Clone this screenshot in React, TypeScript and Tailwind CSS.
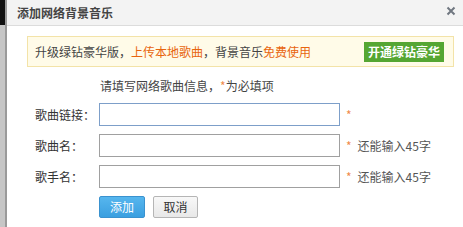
import React from "react";

const font = { fontFamily: '"Noto Sans CJK SC", "Noto Sans", sans-serif' };

function Field({ label, hint, focused }: { label: string; hint?: boolean; focused?: boolean }) {
  return (
    <div className="flex h-[23px] items-center whitespace-nowrap">
      <div className="w-[92px] pl-[28px] text-[12px] text-[#333]">{label}</div>
      <div
        className={`h-[23px] w-[241px] border bg-white ${focused ? "border-[#7d9fc9]" : "border-[#a0a0a0]"}`}
      />
      <span className="ml-[6px] text-[12px] text-[#f08a4b]">*</span>
      {hint && <span className="ml-[6px] text-[12px] text-[#555]">还能输入45字</span>}
    </div>
  );
}

export default function App() {
  return (
    <div className="flex h-[227px] w-[463px] overflow-hidden bg-white" style={font}>
      <div className="flex w-[5px] flex-col">
        <div className="h-[25px] bg-[#111]" />
        <div className="flex-1 bg-[#c6c6c6]" />
      </div>
      <div className="w-[2px] bg-[#9a9a9a]" />
      <div className="flex flex-1 flex-col">
        <div className="flex h-[26px] items-center justify-between border-b border-[#dcdcdc] bg-[#f3f3f3] pl-[10px] pr-[7px]">
          <span className="text-[12px] font-semibold text-[#444]">添加网络背景音乐</span>
          <svg width="10" height="10" viewBox="0 0 10 10" className="mt-[-4px]">
            <path d="M1.5 1.5L8.5 8.5M8.5 1.5L1.5 8.5" stroke="#707780" strokeWidth="2" />
          </svg>
        </div>
        <div className="ml-[20px] mr-[9px] mt-[10px] flex h-[31px] items-center justify-between border border-[#f3e3a8] bg-[#fffbe8] pl-[7px] pr-[9px] text-[12px] text-[#444]">
          <span>
            升级绿钻豪华版，<span className="text-[#e8650e]">上传本地歌曲</span>，背景音乐
            <span className="text-[#e8650e]">免费使用</span>
          </span>
          <span className="flex h-[20px] w-[80px] items-center justify-center bg-[#55a632] text-[12px] font-bold text-white">
            开通绿钻豪华
          </span>
        </div>
        <div className="ml-[93px] mt-[10px] h-[18px] text-[12px] leading-[18px] text-[#444]">
          请填写网络歌曲信息，<span className="text-[#f08a4b]">*</span>为必填项
        </div>
        <div className="mt-[8px] flex flex-col gap-[8px]">
          <Field label="歌曲链接：" focused />
          <Field label="歌曲名：" hint />
          <Field label="歌手名：" hint />
        </div>
        <div className="ml-[92px] mt-[8px] flex gap-[8px]">
          <button className="h-[22px] w-[46px] rounded-[2px] border border-[#3a92cf] bg-gradient-to-b from-[#56b6ee] to-[#3a9fe0] text-[12px] text-white">
            添加
          </button>
          <button className="h-[22px] w-[45px] rounded-[2px] border border-[#b5b5b5] bg-gradient-to-b from-[#f8f8f8] to-[#e8e8e8] text-[12px] text-[#333]">
            取消
          </button>
        </div>
      </div>
    </div>
  );
}
